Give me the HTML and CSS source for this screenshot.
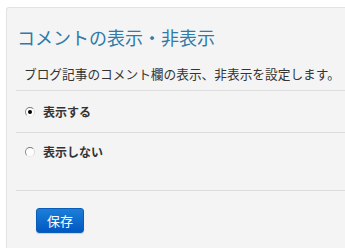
FILE: index.html
```html
<!DOCTYPE html>
<html lang="ja">
<head>
<meta charset="utf-8">
<link rel="stylesheet" href="styles.css">
</head>
<body>
<div class="panel">
  <h1 class="title">コメントの表示・非表示</h1>
  <p class="desc">ブログ記事のコメント欄の表示、非表示を設定します。</p>
  <div class="options">
    <label class="option option-first">
      <span class="radio radio-checked"></span>
      <span class="label">表示する</span>
    </label>
    <label class="option option-last">
      <span class="radio"></span>
      <span class="label">表示しない</span>
    </label>
  </div>
  <div class="actions">
    <button class="save" type="button">保存</button>
  </div>
</div>
</body>
</html>
```
FILE: styles.css
```css
html, body {
  margin: 0;
  padding: 0;
  background: #ffffff;
  overflow: hidden;
}
body {
  padding: 7px 0 0 6px;
  font-family: "Noto Sans CJK JP", "Noto Sans", sans-serif;
  color: #333333;
}
.panel {
  width: 339px;
  height: 241px;
  background: #f4f4f4;
  border: 1px solid #e2e2e2;
  border-right: 0;
  border-bottom: 0;
  border-radius: 3px 0 0 0;
  padding: 17px 0 0 9px;
  box-sizing: border-box;
}
.title {
  margin: 0;
  font-size: 18px;
  line-height: 24px;
  font-weight: normal;
  color: #2f7aa8;
  padding-left: 1px;
}
.desc {
  margin: 17px 0 0 0;
  padding: 0 0 8px 8px;
  font-size: 12.7px;
  line-height: 16px;
  color: #333333;
  border-bottom: 1px solid #dcdcdc;
  white-space: nowrap;
}
.option {
  display: flex;
  align-items: center;
  gap: 8px;
  padding-left: 9px;
  border-bottom: 1px solid #dcdcdc;
}
.option-first {
  height: 41px;
}
.option-last {
  height: 58px;
  align-items: flex-start;
  padding-top: 11px;
  box-sizing: border-box;
}
.radio {
  width: 10px;
  height: 10px;
  border-radius: 50%;
  box-sizing: border-box;
  border: 1px solid;
  border-color: #7a7a7a #d8d8d8 #e8e8e8 #8a8a8a;
  background: #ffffff;
  display: flex;
  align-items: center;
  justify-content: center;
  flex: none;
}
.option-last .radio {
  margin-top: 3px;
}
.radio-checked::after {
  content: "";
  width: 4px;
  height: 4px;
  border-radius: 50%;
  background: #000000;
}
.label {
  font-size: 12px;
  line-height: 16px;
  font-weight: bold;
  color: #333333;
}
.actions {
  padding: 16px 0 0 20px;
}
.save {
  width: 48px;
  height: 25px;
  border: 1px solid #0a5cb8;
  border-radius: 3px;
  background: linear-gradient(#1d7fd8, #0058c2);
  color: #ffffff;
  font-family: "Noto Sans CJK JP", sans-serif;
  font-size: 13px;
  line-height: 23px;
  padding: 0;
  box-shadow: 0 1px 1px rgba(0,0,0,0.15);
}
```
